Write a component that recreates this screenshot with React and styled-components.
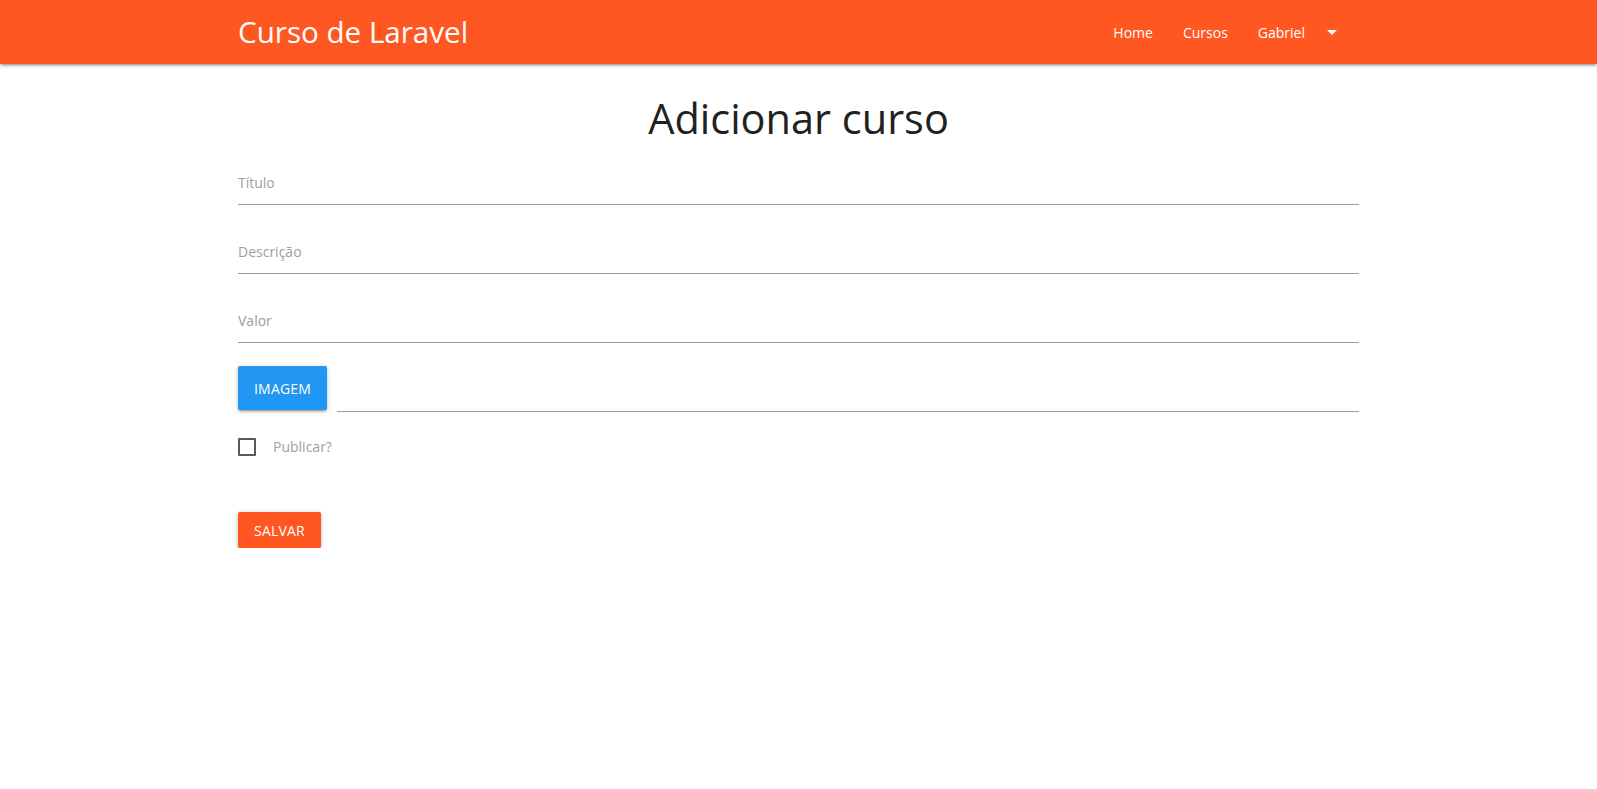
import React from "react";
import styled, { createGlobalStyle } from "styled-components";

const GlobalStyle = createGlobalStyle`
  html, body { margin: 0; padding: 0; background: #fff; }
  body {
    font-family: "Open Sans", "Noto Sans", sans-serif;
    color: rgba(0, 0, 0, 0.87);
  }
  * { box-sizing: border-box; }
`;

const NavBar = styled.nav`
  height: 64px;
  background: #ff5722;
  box-shadow: 0 2px 2px 0 rgba(0,0,0,0.14), 0 3px 1px -2px rgba(0,0,0,0.12), 0 1px 5px 0 rgba(0,0,0,0.2);
`;

const Container = styled.div`
  width: 1121px;
  max-width: 90%;
  margin: 0 auto;
`;

const NavInner = styled(Container)`
  height: 64px;
  display: flex;
  align-items: center;
  justify-content: space-between;
`;

const Brand = styled.a`
  color: #fff;
  font-size: 29.6px;
  text-decoration: none;
  line-height: 64px;
  margin-top: -1px;
`;

const NavList = styled.ul`
  display: flex;
  list-style: none;
  margin: 0;
  padding: 0;
  height: 64px;
`;

const NavLink = styled.a`
  display: flex;
  align-items: center;
  height: 64px;
  padding: 0 15px;
  color: #fff;
  font-size: 14px;
  text-decoration: none;
`;

const Caret = styled.span`
  display: inline-flex;
  width: 24px;
  justify-content: center;
  margin-left: 15px;
`;

const Main = styled(Container)`
  padding-top: 27px;
`;

const Heading = styled.h1`
  margin: 0 0 12px;
  text-align: center;
  font-weight: 400;
  font-size: 41.5px;
  line-height: 54px;
  color: #212121;
`;

const Form = styled.form`
  display: flex;
  flex-direction: column;
  gap: 21px;
`;

const Field = styled.div`
  height: 48px;
  border-bottom: 1px solid #9e9e9e;
  display: flex;
  align-items: flex-end;
  padding-bottom: 11px;
`;

const Label = styled.label`
  color: #9e9e9e;
  font-size: 14px;
  line-height: 20px;
`;

const FileRow = styled.div`
  display: flex;
  align-items: flex-end;
  height: 48px;
  gap: 10px;
`;

const Button = styled.button`
  border: none;
  border-radius: 2px;
  background: ${(p) => p.$bg};
  color: #fff;
  font-family: inherit;
  font-size: 14px;
  text-transform: uppercase;
  letter-spacing: 0.2px;
  padding: 0 16px;
  height: ${(p) => p.$h}px;
  box-shadow: 0 2px 2px 0 rgba(0,0,0,0.14), 0 3px 1px -2px rgba(0,0,0,0.12), 0 1px 5px 0 rgba(0,0,0,0.2);
  cursor: pointer;
`;

const ImgButton = styled(Button)`
  margin-bottom: 2px;
`;

const PathField = styled.div`
  flex: 1;
  height: 48px;
  border-bottom: 1px solid #9e9e9e;
`;

const CheckRow = styled.label`
  display: flex;
  align-items: center;
  gap: 17px;
  margin-top: 4px;
  color: #9e9e9e;
  font-size: 14px;
`;

const Box = styled.span`
  width: 18px;
  height: 18px;
  border: 2px solid #5a5a5a;
  border-radius: 1px;
`;

const SubmitRow = styled.div`
  margin-top: 35px;
`;

export default function App() {
  return (
    <>
      <GlobalStyle />
      <NavBar>
        <NavInner>
          <Brand href="#">Curso de Laravel</Brand>
          <NavList>
            <li><NavLink href="#">Home</NavLink></li>
            <li><NavLink href="#">Cursos</NavLink></li>
            <li>
              <NavLink href="#">
                Gabriel
                <Caret>
                  <svg width="10" height="5" viewBox="0 0 10 5">
                    <path d="M0 0 L10 0 L5 5 Z" fill="#fff" />
                  </svg>
                </Caret>
              </NavLink>
            </li>
          </NavList>
        </NavInner>
      </NavBar>
      <Main>
        <Heading>Adicionar curso</Heading>
        <Form onSubmit={(e) => e.preventDefault()}>
          <Field><Label>Título</Label></Field>
          <Field><Label>Descrição</Label></Field>
          <Field><Label>Valor</Label></Field>
          <FileRow>
            <ImgButton type="button" $bg="#2196f3" $h={44}>Imagem</ImgButton>
            <PathField />
          </FileRow>
          <CheckRow>
            <Box />
            Publicar?
          </CheckRow>
          <SubmitRow>
            <Button type="submit" $bg="#ff5722" $h={36}>Salvar</Button>
          </SubmitRow>
        </Form>
      </Main>
    </>
  );
}
